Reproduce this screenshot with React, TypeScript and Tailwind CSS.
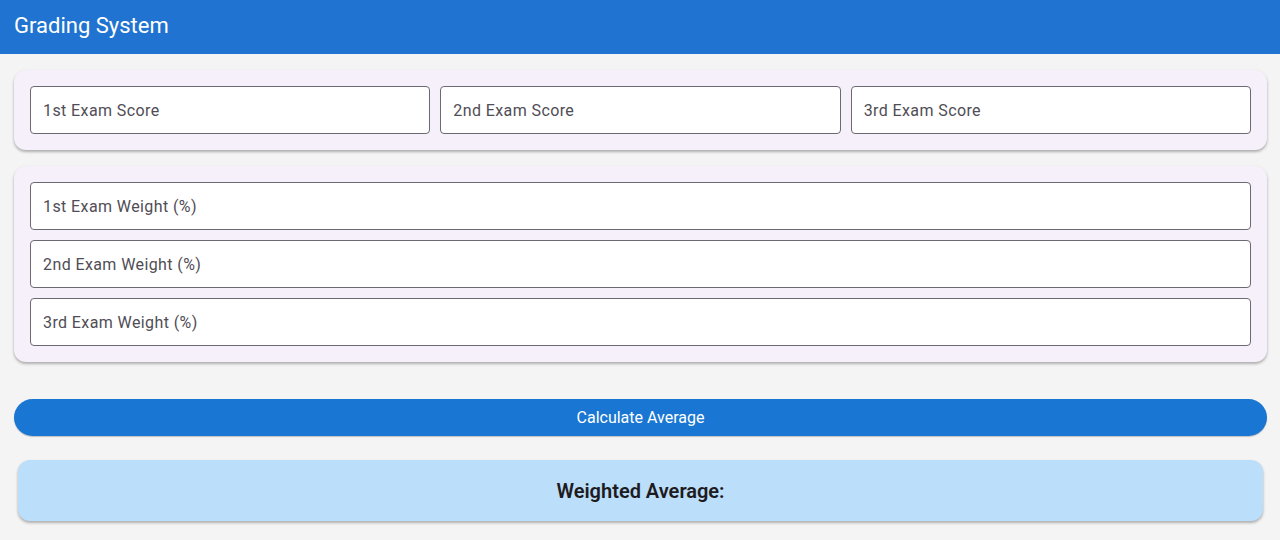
const field =
  "block h-12 w-full min-w-0 rounded border border-[#6d6972] bg-white px-3 text-base tracking-wide text-[#1d1b20] placeholder:text-[#504d55] placeholder:opacity-100 outline-none focus:border-[#1976d2]";

const card =
  "rounded-xl bg-[#f5f0f9] p-4 shadow-[0_2px_3px_rgba(0,0,0,0.26),0_1px_3px_rgba(0,0,0,0.06)]";

const exams = ["1st", "2nd", "3rd"];

export default function App() {
  return (
    <div className="min-h-screen bg-[#f4f4f4] font-['Roboto',sans-serif] text-[#1d1b20]">
      <header className="flex h-[54px] items-center bg-[#2073d0] px-3.5 pb-0.5">
        <h1 className="text-[22px] leading-7 text-white">Grading System</h1>
      </header>
      <main className="pt-4 pr-[13px] pb-4 pl-3.5">
        <section className={`${card} grid grid-cols-3 gap-2.5`}>
          {exams.map((exam) => (
            <input
              key={exam}
              className={field}
              inputMode="decimal"
              aria-label={`${exam} Exam Score`}
              placeholder={`${exam} Exam Score`}
            />
          ))}
        </section>
        <section className={`${card} mt-4 flex flex-col gap-2.5`}>
          {exams.map((exam) => (
            <input
              key={exam}
              className={field}
              inputMode="decimal"
              aria-label={`${exam} Exam Weight (%)`}
              placeholder={`${exam} Exam Weight (%)`}
            />
          ))}
        </section>
        <button
          type="button"
          className="mt-[37px] block h-[37px] w-full rounded-full bg-[#1976d2] text-base text-white shadow-[0_1px_1px_rgba(0,0,0,0.22)]"
        >
          Calculate Average
        </button>
        <div className="mx-1 mt-6 flex h-[61px] items-center justify-center rounded-xl bg-[#bbdefb] shadow-[0_2px_3px_rgba(0,0,0,0.26),0_1px_3px_rgba(0,0,0,0.06)]">
          <output className="text-xl leading-7 font-semibold">Weighted Average:</output>
        </div>
      </main>
    </div>
  );
}
